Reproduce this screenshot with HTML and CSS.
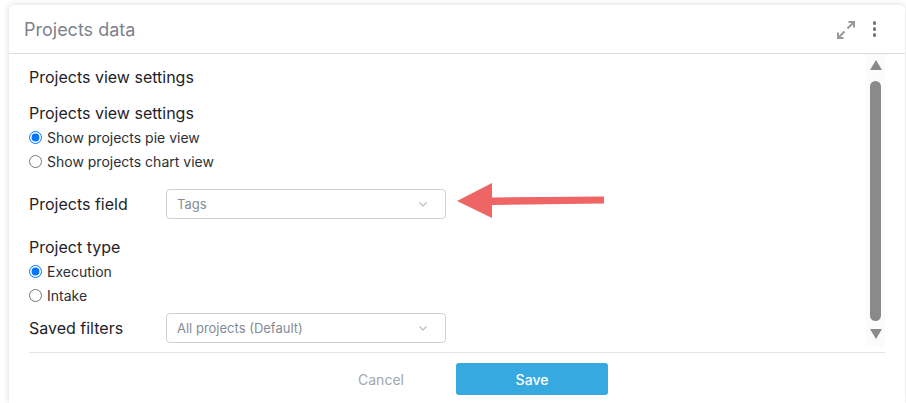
FILE: index.html
```html
<!DOCTYPE html>
<html lang="en">
<head>
<meta charset="UTF-8">
<title>Projects data</title>
<link rel="stylesheet" href="styles.css">
</head>
<body>

<div class="card">
    <div class="card-header">
        <span class="card-title">Projects data</span>
        <svg class="icon-expand" width="20" height="20" viewBox="0 0 20 20">
            <path d="M11.5 8.5 L17 3 M12.5 2 H18 V7.5 M8.5 11.5 L3 17 M2 12.5 V18 H7.5" fill="none" stroke="#999" stroke-width="2"/>
        </svg>
        <div class="icon-dots"><i></i><i></i><i></i></div>
    </div>

    <div class="card-body">
        <div class="settings">
            <div class="label section-title">Projects view settings</div>
            <div class="label">Projects view settings</div>
            <label class="radio-row"><input type="radio" name="view" checked>Show projects pie view</label>
            <label class="radio-row"><input type="radio" name="view">Show projects chart view</label>

            <div class="field-row field-first">
                <span class="label field-label">Projects field</span>
                <div class="select">
                    <span>Tags</span>
                    <svg width="8" height="5" viewBox="0 0 8 5"><path d="M0.5 0.5 L4 4 L7.5 0.5" fill="none" stroke="#bbb" stroke-width="1.2"/></svg>
                </div>
            </div>

            <div class="label type-label">Project type</div>
            <label class="radio-row"><input type="radio" name="type" checked>Execution</label>
            <label class="radio-row"><input type="radio" name="type">Intake</label>

            <div class="field-row field-last">
                <span class="label field-label">Saved filters</span>
                <div class="select">
                    <span>All projects (Default)</span>
                    <svg width="8" height="5" viewBox="0 0 8 5"><path d="M0.5 0.5 L4 4 L7.5 0.5" fill="none" stroke="#bbb" stroke-width="1.2"/></svg>
                </div>
            </div>
        </div>

        <div class="scrollbar">
            <div class="arrow-up"></div>
            <div class="thumb"></div>
            <div class="arrow-down"></div>
        </div>
    </div>

    <div class="card-footer">
        <button class="cancel-button">Cancel</button>
        <button class="save-button">Save</button>
    </div>

    <!-- annotation arrow drawn over the form -->
    <svg class="annotation" width="150" height="38" viewBox="0 0 150 38">
        <path d="M0 18 L35 0 V14.5 L147 13.5 V20.5 L35 22 V35 Z" fill="#ef6566"/>
    </svg>
</div>

</body>
</html>
```

FILE: styles.css
```css
html, body {
    height: 100%;
}
body {
    margin: 0;
    background-color: #fff;
    font-family: Inter, "Liberation Sans", sans-serif;
    color: #1f2329;
    overflow: hidden;
}
.card {
    position: relative;
    box-sizing: border-box;
    width: 896px;
    height: 398px;
    margin: 5px 0 0 9px;
    background-color: #fff;
    border-radius: 5px 5px 0 0;
    box-shadow: 0 0 6px rgba(0, 0, 0, 0.16);
}
.card-header {
    display: flex;
    align-items: center;
    height: 48px;
    padding: 0 29px 0 15px;
    border-bottom: 1px solid #dcdbe4;
}
.card-title {
    flex: 1;
    font-size: 18px;
    color: #7d828e;
}
.icon-expand {
    margin: 2px 17px 0 0;
}
.icon-dots {
    display: flex;
    flex-direction: column;
    gap: 2.5px;
}
.icon-dots i {
    display: block;
    width: 3.5px;
    height: 3.5px;
    border-radius: 50%;
    background-color: #6e7683;
}
.card-body {
    display: flex;
    height: 298px;
    padding: 0 20px;
}
.settings {
    flex: 1;
    padding-top: 13px;
}
.label {
    font-size: 16px;
    line-height: 20px;
}
.section-title {
    margin-bottom: 16px;
}
.label + .radio-row {
    margin-top: 2px;
}
.radio-row {
    display: flex;
    align-items: center;
    height: 24px;
    font-size: 14px;
    color: #2b2f36;
}
.radio-row input {
    width: 13px;
    height: 13px;
    margin: 1px 5px 0 0;
    accent-color: #0075ff;
}
.field-row {
    display: flex;
    align-items: center;
}
.field-first {
    margin-top: 16px;
}
.field-last {
    margin-top: 6px;
}
.field-label {
    width: 137px;
}
.type-label {
    margin-top: 18px;
}
.select {
    box-sizing: border-box;
    display: flex;
    align-items: center;
    justify-content: space-between;
    width: 280px;
    height: 30px;
    padding: 0 18px 0 10px;
    border: 1px solid #d0d0d0;
    border-radius: 4px;
    font-size: 13px;
    color: #858b96;
}
.scrollbar {
    display: flex;
    flex-direction: column;
    align-items: center;
    width: 19px;
    background-color: #fbfbfb;
    padding-top: 6px;
    height: 287px;
}
.arrow-up {
    width: 0;
    height: 0;
    border-left: 6.5px solid transparent;
    border-right: 6.5px solid transparent;
    border-bottom: 10px solid #8a8a8a;
}
.thumb {
    width: 11px;
    height: 240px;
    margin: 11px 0 8px;
    border-radius: 6px;
    background-color: #8a8a8a;
}
.arrow-down {
    width: 0;
    height: 0;
    border-left: 6.5px solid transparent;
    border-right: 6.5px solid transparent;
    border-top: 10px solid #8a8a8a;
}
.card-footer {
    display: flex;
    justify-content: center;
    align-items: flex-start;
    margin: 0 20px;
    padding: 10px 2px 0 0;
    border-top: 1px solid #e5e5e8;
}
.cancel-button {
    width: 152px;
    height: 32px;
    padding: 0 0 0 2px;
    border: none;
    background: none;
    font-family: inherit;
    font-size: 14px;
    color: #a3a6ac;
}
.save-button {
    width: 152px;
    height: 32px;
    border: none;
    border-radius: 3px;
    background-color: #36a9e1;
    font-family: inherit;
    font-size: 14px;
    font-weight: 500;
    color: #fff;
}
.annotation {
    position: absolute;
    left: 448px;
    top: 178px;
}
```
